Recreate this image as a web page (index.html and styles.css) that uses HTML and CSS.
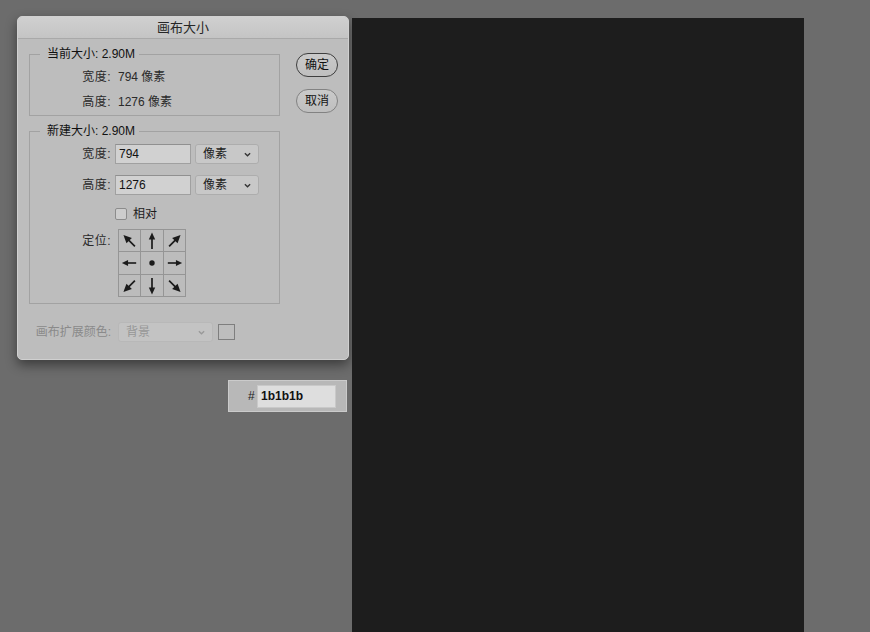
FILE: index.html
```html
<!DOCTYPE html>
<html lang="zh">
<head>
<meta charset="utf-8">
<title>画布大小</title>
<link rel="stylesheet" href="styles.css">
</head>
<body>
<div class="stage">
  <div class="left">
    <div class="dialog">
      <div class="titlebar">画布大小</div>
      <div class="dbody">
        <div class="main">
          <fieldset class="group g1">
            <legend>当前大小: 2.90M</legend>
            <div class="row"><span class="lbl">宽度:</span><span class="val">794 像素</span></div>
            <div class="row r2"><span class="lbl">高度:</span><span class="val">1276 像素</span></div>
          </fieldset>
          <fieldset class="group g2">
            <legend>新建大小: 2.90M</legend>
            <div class="frow"><span class="lbl">宽度:</span><span class="input">794</span><span class="select">像素<svg class="chev" viewBox="0 0 8 5"><path d="M1 1l3 3 3-3"/></svg></span></div>
            <div class="frow r2f"><span class="lbl">高度:</span><span class="input">1276</span><span class="select">像素<svg class="chev" viewBox="0 0 8 5"><path d="M1 1l3 3 3-3"/></svg></span></div>
            <div class="crow"><span class="check"></span><span class="clabel">相对</span></div>
            <div class="arow"><span class="lbl alabel">定位:</span>
              <div class="anchor">
                <div class="cell"><svg viewBox="0 0 22 22"><g transform="rotate(-45 11 11)"><path class="shaft" d="M11 19V9"/><path class="head" d="M11 2L7 10.5h8z"/></g></svg></div>
                <div class="cell"><svg viewBox="0 0 22 22"><g><path class="shaft" d="M11 19V9"/><path class="head" d="M11 2.5L7.8 9.5h6.4z"/></g></svg></div>
                <div class="cell"><svg viewBox="0 0 22 22"><g transform="rotate(45 11 11)"><path class="shaft" d="M11 19V9"/><path class="head" d="M11 2L7 10.5h8z"/></g></svg></div>
                <div class="cell"><svg viewBox="0 0 22 22"><g transform="rotate(-90 11 11)"><path class="shaft" d="M11 18V9"/><path class="head" d="M11 3L7.8 9.5h6.4z"/></g></svg></div>
                <div class="cell"><svg viewBox="0 0 22 22"><circle class="head" cx="11" cy="11" r="2.7"/></svg></div>
                <div class="cell"><svg viewBox="0 0 22 22"><g transform="rotate(90 11 11)"><path class="shaft" d="M11 18V9"/><path class="head" d="M11 3L7.8 9.5h6.4z"/></g></svg></div>
                <div class="cell"><svg viewBox="0 0 22 22"><g transform="rotate(-135 11 11)"><path class="shaft" d="M11 19V9"/><path class="head" d="M11 2L7 10.5h8z"/></g></svg></div>
                <div class="cell"><svg viewBox="0 0 22 22"><g transform="rotate(180 11 11)"><path class="shaft" d="M11 19V9"/><path class="head" d="M11 2.5L7.8 9.5h6.4z"/></g></svg></div>
                <div class="cell"><svg viewBox="0 0 22 22"><g transform="rotate(135 11 11)"><path class="shaft" d="M11 19V9"/><path class="head" d="M11 2L7 10.5h8z"/></g></svg></div>
              </div>
            </div>
          </fieldset>
          <div class="extrow">
            <span class="lbl extlabel">画布扩展颜色:</span>
            <span class="select wide disabled">背景<svg class="chev" viewBox="0 0 8 5"><path d="M1 1l3 3 3-3"/></svg></span>
            <span class="swatch"></span>
          </div>
        </div>
        <div class="buttons">
          <button class="btn default">确定</button>
          <button class="btn cancel">取消</button>
        </div>
      </div>
    </div>
    <div class="hexpanel"><span class="hash">#</span><span class="hexinput">1b1b1b</span></div>
  </div>
  <div class="canvas"></div>
</div>
</body>
</html>
```

FILE: styles.css
```css
html, body {
  margin: 0;
  padding: 0;
}
body {
  background: #6c6c6c;
  width: 870px;
  height: 632px;
  overflow: hidden;
  font-family: "Liberation Sans", "Noto Sans CJK SC", sans-serif;
  font-size: 12px;
  color: #222;
}
.stage {
  display: flex;
  align-items: flex-start;
  height: 632px;
}
.left {
  width: 352px;
  flex: none;
  padding: 16px 0 0 17px;
  box-sizing: border-box;
  display: flex;
  flex-direction: column;
}
.dialog {
  width: 332px;
  height: 344px;
  box-sizing: border-box;
  background: #bdbdbd;
  border: 1px solid #d0d0d0;
  border-radius: 5px;
  box-shadow: 0 5px 12px rgba(0, 0, 0, 0.45);
  overflow: hidden;
}
.titlebar {
  height: 21px;
  line-height: 21px;
  text-align: center;
  font-size: 13px;
  color: #262626;
  background: linear-gradient(#d0d0d0, #c4c4c4);
  border-bottom: 1px solid #a9a9a9;
}
.dbody {
  display: flex;
  padding-left: 11px;
}
.main {
  width: 251px;
  flex: none;
}
.group {
  margin: 7px 0 0;
  padding: 0;
  border: 1px solid #a2a2a2;
  min-inline-size: 0;
}
.group legend {
  margin-left: 10px;
  padding: 0 4px 0 7px;
  line-height: 16px;
  height: 16px;
  color: #111;
}
.g1 {
  padding: 7px 0 5px;
}
.row {
  display: flex;
  line-height: 16px;
  height: 16px;
}
.row.r2 {
  margin-top: 9px;
}
.lbl {
  width: 81px;
  padding-right: 3px;
  flex: none;
  text-align: right;
  color: #2a2a2a;
  letter-spacing: 0.5px;
}
.val {
  margin-left: 4px;
  color: #2a2a2a;
}
.g2 {
  padding: 5px 0 6px;
}
.frow {
  display: flex;
  align-items: center;
  height: 20px;
  line-height: 20px;
}
.frow.r2f {
  margin-top: 11px;
}
.input {
  margin-left: 1px;
  width: 76px;
  height: 20px;
  box-sizing: border-box;
  border: 1px solid #a0a0a0;
  border-top-color: #909090;
  background: #d1d1d1;
  padding-left: 3px;
  line-height: 18px;
  color: #111;
}
.select {
  margin-left: 4px;
  width: 64px;
  height: 20px;
  box-sizing: border-box;
  border: 1px solid #adadad;
  border-radius: 3px;
  background: #c8c8c8;
  display: flex;
  align-items: center;
  justify-content: space-between;
  padding: 0 7px 0 7px;
  line-height: 18px;
  color: #1c1c1c;
}
.chev {
  width: 7px;
  height: 5px;
  fill: none;
  stroke: #333;
  stroke-width: 1.5;
}
.crow {
  display: flex;
  align-items: center;
  margin-top: 13px;
  height: 12px;
  padding-left: 85px;
}
.check {
  width: 12px;
  height: 12px;
  box-sizing: border-box;
  border: 1px solid #8c8c8c;
  border-radius: 2px;
  background: #cdcdcd;
}
.clabel {
  margin-left: 6px;
  line-height: 12px;
  color: #1c1c1c;
}
.arow {
  display: flex;
  margin-top: 9px;
}
.alabel {
  padding-top: 4px;
  line-height: 16px;
  height: 16px;
}
.anchor {
  margin-left: 4px;
  display: grid;
  grid-template-columns: 21px 22px 21px;
  grid-template-rows: 21px 22px 21px;
  gap: 1px;
  background: #959595;
  border: 1px solid #959595;
  width: fit-content;
}
.cell {
  background: #bcbcbc;
  display: flex;
  align-items: center;
  justify-content: center;
}
.cell svg {
  width: 22px;
  height: 22px;
}
.shaft {
  stroke: #1b1b1b;
  stroke-width: 1.7;
  fill: none;
}
.head {
  fill: #1b1b1b;
}
.extrow {
  display: flex;
  align-items: center;
  margin-top: 18px;
  height: 20px;
}
.extlabel {
  width: 82px;
  color: #8a8a8a;
  line-height: 20px;
  letter-spacing: 0;
}
.select.wide {
  width: 95px;
}
.select.disabled {
  background: #c3c3c3;
  border-color: #b8b8b8;
  color: #979797;
}
.select.disabled .chev {
  stroke: #999;
}
.swatch {
  margin-left: 5px;
  width: 17px;
  height: 16px;
  box-sizing: border-box;
  border: 1px solid #7e7e7e;
  background: #bdbdbd;
}
.buttons {
  display: flex;
  flex-direction: column;
  margin-left: 16px;
  padding-top: 14px;
}
.btn {
  width: 42px;
  height: 24px;
  box-sizing: border-box;
  border-radius: 12px;
  font-family: "Liberation Sans", "Noto Sans CJK SC", sans-serif;
  font-size: 12px;
  line-height: 20px;
  padding: 0;
  color: #111;
  background: linear-gradient(#cacaca, #bfbfbf);
}
.btn.default {
  border: 1px solid #3e3e3e;
}
.btn.cancel {
  margin-top: 12px;
  border: 1px solid #828282;
}
.hexpanel {
  margin: 20px 0 0 211px;
  width: 119px;
  height: 32px;
  box-sizing: border-box;
  border: 1px solid #cbcbcb;
  background: #b8b8b8;
  display: flex;
  align-items: center;
  padding-left: 19px;
}
.hash {
  color: #222;
  width: 8px;
}
.hexinput {
  margin-left: 1px;
  width: 79px;
  height: 23px;
  box-sizing: border-box;
  border: 1px solid #c9c9c9;
  background: #dedede;
  padding-left: 3px;
  line-height: 21px;
  font-weight: bold;
  color: #111;
}
.canvas {
  margin-top: 18px;
  width: 452px;
  height: 614px;
  flex: none;
  background: #1d1d1d;
}
```
